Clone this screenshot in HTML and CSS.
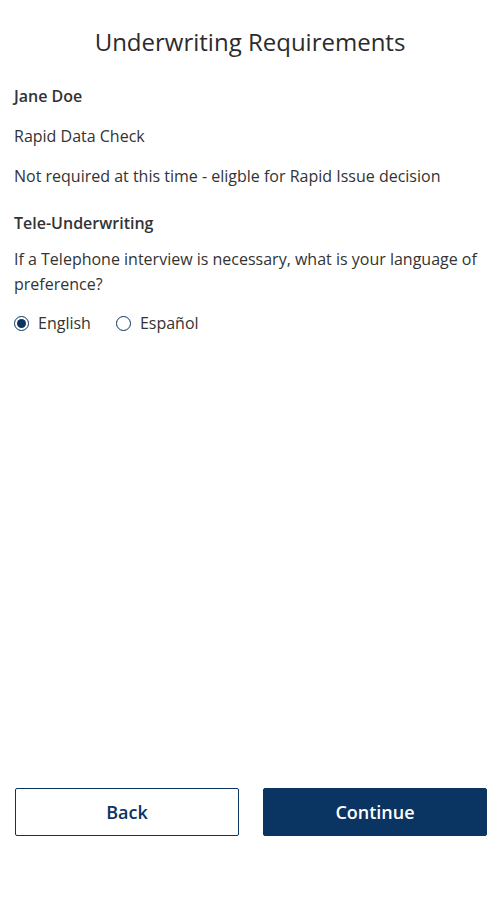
FILE: index.html
```html
<!DOCTYPE html>
<html lang="en">
<head>
<meta charset="utf-8">
<title>Underwriting Requirements</title>
<link rel="stylesheet" href="styles.css">
</head>
<body>
<div class="page">
  <main class="content">
    <h1 class="title">Underwriting Requirements</h1>
    <p class="name">Jane Doe</p>
    <p class="text">Rapid Data Check</p>
    <p class="text">Not required at this time - eligble for Rapid Issue decision</p>
    <h2 class="section">Tele-Underwriting</h2>
    <p class="question">If a Telephone interview is necessary, what is your language of preference?</p>
    <div class="radios">
      <label class="radio"><span class="dot checked"></span><span>English</span></label>
      <label class="radio"><span class="dot"></span><span>Español</span></label>
    </div>
  </main>
  <footer class="actions">
    <button class="btn btn-outline">Back</button>
    <button class="btn btn-primary">Continue</button>
  </footer>
</div>
</body>
</html>
```
FILE: styles.css
```css
* { box-sizing: border-box; }
html, body { margin: 0; padding: 0; background: #fff; }
body {
  font-family: "Open Sans", "Noto Sans", sans-serif;
  color: #333;
  font-size: 16px;
}
.page {
  width: 500px;
  height: 900px;
  display: flex;
  flex-direction: column;
}
.content {
  flex: 1;
  padding: 26px 14px 0 14px;
}
.title {
  margin: 0;
  font-size: 24px;
  line-height: 32px;
  font-weight: 400;
  text-align: center;
  color: #2b2b2b;
}
.name {
  margin: 26px 0 0;
  font-weight: 600;
  line-height: 24px;
}
.text {
  margin: 16px 0 0;
  line-height: 24px;
}
.section {
  margin: 23px 0 0;
  font-size: 16px;
  font-weight: 600;
  line-height: 24px;
}
.question {
  margin: 12px 0 0;
  line-height: 25px;
}
.radios {
  margin-top: 14px;
  display: flex;
  gap: 25px;
  height: 24px;
  align-items: center;
}
.radio {
  display: flex;
  align-items: center;
  gap: 9px;
  line-height: 24px;
}
.dot {
  width: 15px;
  height: 15px;
  border: 1.5px solid #0a3461;
  border-radius: 50%;
  display: inline-flex;
  align-items: center;
  justify-content: center;
}
.dot.checked::after {
  content: "";
  width: 9px;
  height: 9px;
  border-radius: 50%;
  background: #0a3461;
}
.actions {
  display: flex;
  gap: 24px;
  padding: 0 13px 64px 15px;
}
.btn {
  flex: 1;
  height: 48px;
  border-radius: 2px;
  font-family: "Open Sans", "Noto Sans", sans-serif;
  font-size: 18px;
  font-weight: 600;
  border: 1px solid #0a3461;
}
.btn-outline {
  background: #fff;
  color: #0a3461;
}
.btn-primary {
  background: #0a3461;
  color: #fff;
}
```
